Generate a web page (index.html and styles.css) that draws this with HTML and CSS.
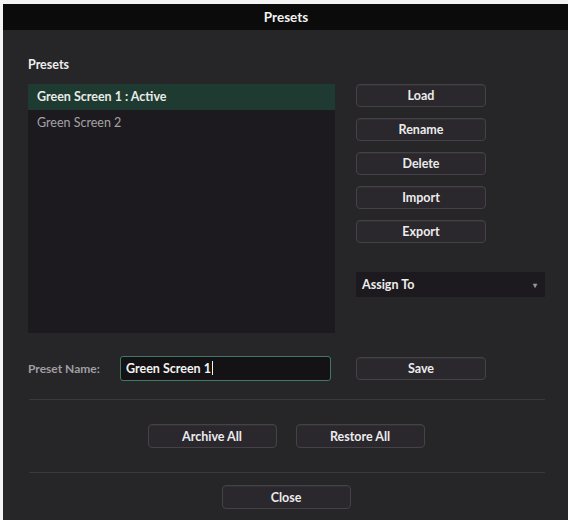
FILE: index.html
```html
<!DOCTYPE html>
<html lang="en">
<head>
    <meta charset="UTF-8">
    <meta name="viewport" content="width=device-width, initial-scale=1.0">
    <title>Presets</title>
    <link rel="stylesheet" href="styles.css">
</head>
<body>
    <div class="dialog">
        <div class="titlebar">Presets</div>
        <div class="content">
            <div class="top">
                <div class="left">
                    <div class="label">Presets</div>
                    <div class="list">
                        <div class="row active">Green Screen 1 : Active</div>
                        <div class="row">Green Screen 2</div>
                    </div>
                </div>
                <div class="right">
                    <button class="btn">Load</button>
                    <button class="btn">Rename</button>
                    <button class="btn">Delete</button>
                    <button class="btn">Import</button>
                    <button class="btn">Export</button>
                    <div class="select">
                        <span>Assign To</span>
                        <span class="caret">&#9662;</span>
                    </div>
                </div>
            </div>
            <div class="name-row">
                <div class="name-left">
                    <span class="name-label">Preset Name:</span>
                    <div class="input">Green Screen 1<span class="cursor"></span></div>
                </div>
                <button class="btn">Save</button>
            </div>
            <hr class="divider">
            <div class="center-row pair">
                <button class="btn wide">Archive All</button>
                <button class="btn wide">Restore All</button>
            </div>
            <hr class="divider second">
            <div class="center-row close">
                <button class="btn wide">Close</button>
            </div>
        </div>
    </div>
</body>
</html>
```

FILE: styles.css
```css
body {
    margin: 0;
    background: #f4f4f4;
    font-family: Lato, "Open Sans", sans-serif;
    overflow: hidden;
}
.dialog {
    margin: 4px 0 0 3px;
    width: 566px;
    height: 520px;
    background: #262528;
    color: #e6e6e6;
}
.titlebar {
    height: 26px;
    line-height: 26px;
    background: #0b0b0b;
    text-align: center;
    font-weight: bold;
    font-size: 13.5px;
    color: #f2f2f2;
}
.content {
    padding: 27px 21px 0 25px;
}
.top {
    display: flex;
    gap: 21px;
}
.label {
    font-size: 12.5px;
    font-weight: bold;
    line-height: 16px;
    margin-bottom: 11px;
    color: #eeeeee;
}
.list {
    width: 307px;
    height: 249px;
    background: #1d1a1f;
}
.row {
    height: 26px;
    line-height: 26px;
    padding-left: 9px;
    font-size: 12.5px;
    color: #a4a2a6;
}
.row.active {
    background: #1f3a30;
    color: #e8ece9;
    font-weight: bold;
}
.right {
    display: flex;
    flex-direction: column;
    gap: 11px;
    padding-top: 27px;
}
.btn {
    width: 130px;
    height: 23px;
    padding: 0;
    background: #2a282c;
    border: 1px solid #444247;
    border-radius: 4px;
    color: #ececec;
    font-family: Lato, "Open Sans", sans-serif;
    font-weight: bold;
    font-size: 12.5px;
    box-shadow: inset 0 1px 0 rgba(255,255,255,0.04);
}
.select {
    margin-top: 18px;
    width: 189px;
    height: 25px;
    background: #1c1a1e;
    display: flex;
    align-items: center;
    justify-content: space-between;
    padding: 0 8px 0 6px;
    box-sizing: border-box;
    font-size: 12.5px;
    font-weight: bold;
    color: #eeeeee;
}
.caret {
    font-size: 8px;
    color: #9a989c;
}
.name-row {
    display: flex;
    align-items: center;
    gap: 25px;
    margin-top: 23px;
}
.name-left {
    width: 303px;
    display: flex;
    align-items: center;
    justify-content: space-between;
}
.name-label {
    font-size: 12px;
    font-weight: bold;
    color: #a09ea3;
}
.input {
    width: 211px;
    height: 25px;
    box-sizing: border-box;
    border: 1px solid #3f7a64;
    border-radius: 3px;
    background: #141215;
    padding-left: 5px;
    line-height: 23px;
    font-size: 12.5px;
    font-weight: bold;
    color: #f2f2f2;
}
.cursor {
    display: inline-block;
    width: 1px;
    height: 14px;
    background: #f2f2f2;
    vertical-align: -2px;
    margin-left: 1px;
}
.divider {
    border: none;
    border-top: 1px solid #3a383c;
    margin: 18px 0 0 1px;
    width: 516px;
}
.center-row {
    display: flex;
    justify-content: center;
    gap: 19px;
    margin-left: -25px;
    margin-right: -21px;
}
.pair {
    margin-top: 24px;
}
.wide {
    width: 129px;
    height: 24px;
}
.divider.second {
    margin-top: 24px;
}
.close {
    margin-top: 12px;
}
```
